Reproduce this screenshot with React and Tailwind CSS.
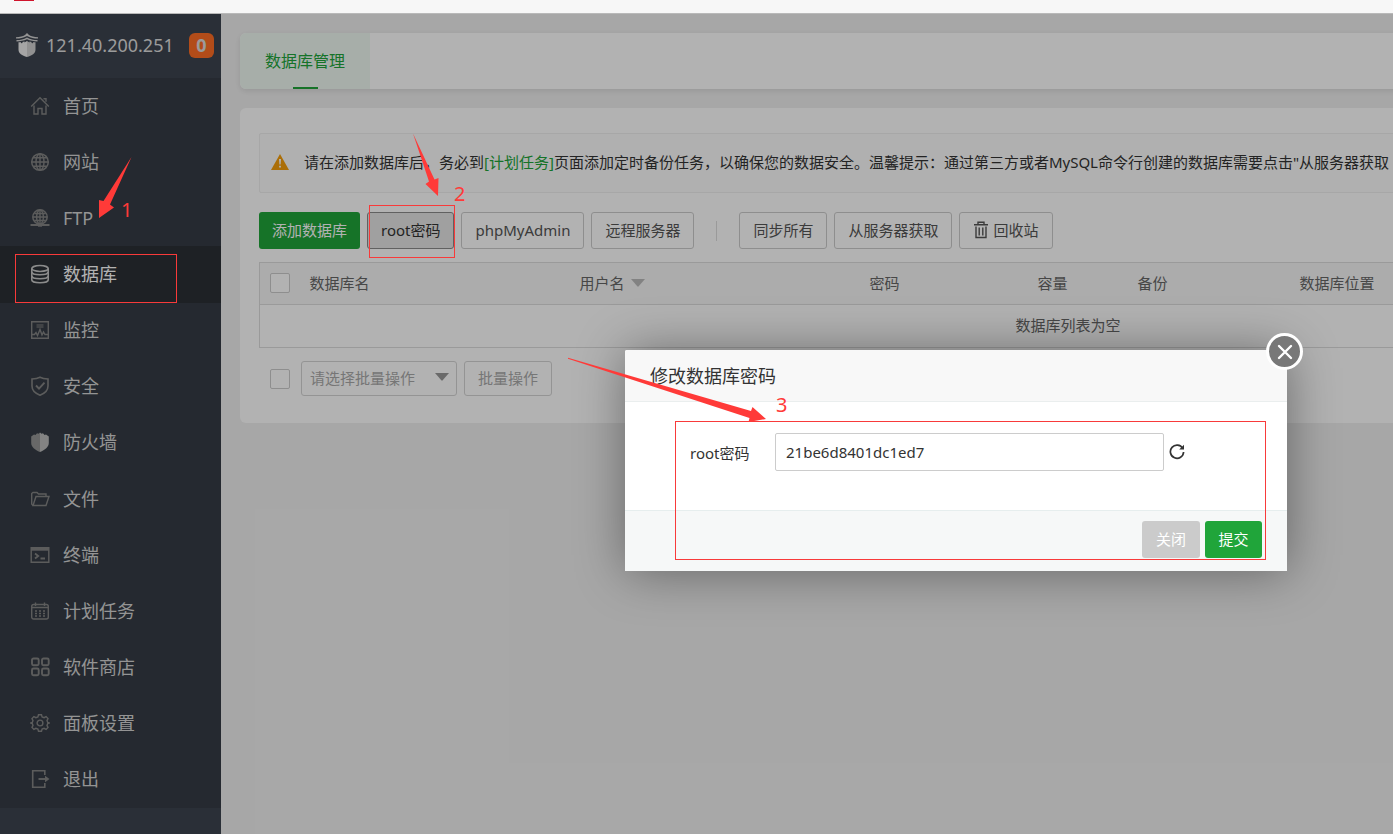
import React from "react";

const icons = {
  home: (
    <>
      <path d="M1.200 10.500 10 1.800l8.800 8.700" />
      <path d="M4 9.500V18h4v-5.500h4V18h4V9.500" />
      <path d="M13.500 2.800H16v3" />
    </>
  ),
  globe: (
    <>
      <circle cx="10" cy="10" r="8.300" strokeWidth="1.500" />
      <ellipse cx="10" cy="10" rx="4" ry="8.300" />
      <path d="M10 1.700v16.600M1.700 10h16.600M3.200 5.800h13.600M3.200 14.200h13.600" />
    </>
  ),
  ftp: (
    <>
      <circle cx="10" cy="9" r="7.200" strokeWidth="1.500" />
      <ellipse cx="10" cy="9" rx="3.400" ry="7" />
      <path d="M10 2v14M3 9h14M4.500 5.500h11M4.500 12.500h11" />
      <path d="M0.500 17h19" strokeWidth="2" />
      <path d="M8 17h4" strokeWidth="3.400" />
    </>
  ),
  database: (
    <g strokeWidth="1.600">
      <ellipse cx="10" cy="4.500" rx="8.200" ry="3" />
      <path d="M1.800 4.500v11.500c0 1.500 3.600 2.700 8.200 2.700s8.200-1.200 8.200-2.700V4.500" />
      <path d="M2 8c0 1.600 3.500 2.700 8 2.700s8-1.100 8-2.700M2 12c0 1.600 3.500 2.700 8 2.700s8-1.100 8-2.700" />
    </g>
  ),
  monitor: (
    <>
      <path d="M1.700 1.700h16.600v16.600H1.700z" />
      <path d="M6.500 5h7M6.500 7h7" strokeWidth="1.100" />
      <path d="M2 14.500h2.500l1.500-2 1.500 3 2.500-6 2 5.500 1.500-3 1.500 2.500H18" />
    </>
  ),
  safe: (
    <g strokeWidth="1.600">
      <path d="M10 1.200c2.500 1.200 5 1.600 8 1.800v7c0 4.500-3.500 7.500-8 9.200C5.500 17.500 2 14.500 2 10V3c3-.2 5.500-.6 8-1.800z" />
      <path d="m6 9.500 3 3.200 5.500-6" strokeWidth="1.900" />
    </g>
  ),
  firewall: (
    <g stroke="none">
      <path d="M10 0.500 8.500 1.800 7 1.300 5.500 3 4 2.600 1.200 4.500V11c0 4 3.800 7 8.800 9z" fill="#969696" />
      <path d="m10 0.500 1.500 1.300 1.500-.5L14.500 3l1.500-.4 2.800 1.900V11c0 4-3.800 7-8.800 9z" fill="#bcbcbc" />
    </g>
  ),
  folder: (
    <>
      <path d="M3 16.500 1.700 15V4.500L3 3.500h4l1.500 1.500H16v2" />
      <path d="M3 16.500 6 7.500h13L16 16.500z" />
    </>
  ),
  terminal: (
    <>
      <path d="M1.200 2.700h17.600v14.600H1.200z" />
      <path d="M1 4h18" strokeWidth="3.400" />
      <path d="m5 8.500 3.200 2.500L5 13.500M10.500 13.500h4.500" strokeWidth="1.800" />
    </>
  ),
  calendar: (
    <>
      <rect x="1.700" y="3.500" width="16.600" height="14.500" rx="2" />
      <path d="M2 6.500h16M5.500 1.500v3.500M14.500 1.500v3.500" />
      <path d="M5 10h10M5 12.500h10M5 15h10" strokeDasharray="2 2" />
    </>
  ),
  store: (
    <g strokeWidth="1.900">
      <rect x="2" y="1.500" width="6.700" height="6.700" rx="1.500" />
      <rect x="12" y="1.500" width="6.700" height="6.700" rx="1.500" />
      <rect x="2" y="11.500" width="6.700" height="6.700" rx="1.500" />
      <rect x="12" y="11.500" width="6.700" height="6.700" rx="1.500" />
    </g>
  ),
  settings: (
    <>
      <circle cx="10" cy="10" r="2.900" />
      <path d="M8.500 1.800h3l.6 2.100 2 .8 2-1.100 1.900 2-1 2 .7 1.800 1.500.6-1.500.6-.7 1.800 1 2-1.900 2-2-1.100-2 .8-.6 2.100h-3l-.6-2.100-2-.8-2 1.100-1.900-2 1-2-.7-1.800L.8 10l1.500-.6L3 7.600l-1-2 1.900-2 2 1.100 2-.8z" />
    </>
  ),
  exit: (
    <>
      <path d="M14.800 6V1.700H2.700v16.600h12.100V14" strokeWidth="1.600" />
      <path d="M8.500 10H17" strokeWidth="1.900" />
      <path d="m15 6.800 4.500 3.200-4.500 3.200z" fill="currentColor" stroke="none" />
    </>
  ),
};

const menu = [
  ["home", "首页"],
  ["globe", "网站"],
  ["ftp", "FTP"],
  ["database", "数据库"],
  ["monitor", "监控"],
  ["safe", "安全"],
  ["firewall", "防火墙"],
  ["folder", "文件"],
  ["terminal", "终端"],
  ["calendar", "计划任务"],
  ["store", "软件商店"],
  ["settings", "面板设置"],
  ["exit", "退出"],
];

function MenuItem({ icon, label, active }) {
  return (
    <li className={active ? "flex bg-[#2b3035]" : "flex"}>
      <a
        href={"#" + icon}
        className={
          "flex flex-1 items-center gap-[13px] pb-px pl-[30px] text-lg leading-6 " +
          (active ? "text-white" : "text-[#d4d4d4]")
        }
      >
        <svg
          viewBox="0 0 20 20"
          className={"size-5 " + (active ? "text-[#c8c8c8]" : "text-[#858585]")}
          fill="none"
          stroke="currentColor"
          strokeWidth="1.400"
          aria-hidden="true"
        >
          {icons[icon]}
        </svg>
        {label}
      </a>
    </li>
  );
}

function Sidebar() {
  return (
    <aside className="w-[221px] shrink-0 bg-[#3d444f]">
      <div className="flex h-16 items-center pr-[7px] pb-[2px] pl-[15px] text-[#dedede]">
        <svg viewBox="0 0 24 26" className="h-[26px] w-6" aria-hidden="true">
          <path d="M12 1 14 3c2.500 1.600 5 2 9 2.200v1.400c-4 0-7-.6-11-2.500C8 6 5 6.600 1 6.600V5.200C5 5 7.500 4.600 10 3z" fill="#d4d4d4" />
          <path d="M12 5.500c3.500 1.800 6.500 2.500 10.500 2.600v1.300C18.500 9.300 15.500 8.800 12 7.300 8.500 8.800 5.500 9.300 1.500 9.400V8.100C5.500 8 8.500 7.300 12 5.500z" fill="#d4d4d4" />
          <path d="M3.500 10.300H6v1l1.500-.3V10l2-.5v1L12 9V25c-5-1.600-8.500-3.500-8.500-7.500z" fill="#ececec" />
          <path d="M20.500 10.300H18v1l-1.500-.3V10l-2-.5v1L12 9V25c5-1.600 8.500-3.500 8.500-7.500z" fill="#d0d0d0" />
        </svg>
        <span className="ml-[7px] text-lg">121.40.200.251</span>
        <span className="ml-auto flex size-[25px] items-center justify-center rounded-md bg-[#ff6e25] text-lg font-bold">
          0
        </span>
      </div>
      <ul className="grid h-[730px] auto-rows-fr bg-[#353c45]">
        {menu.map(([icon, label]) => (
          <MenuItem key={icon} icon={icon} label={label} active={icon === "database"} />
        ))}
      </ul>
    </aside>
  );
}

function ToolButton({ children, pressed }) {
  return (
    <button
      type="button"
      className={
        "flex h-[37px] items-center gap-1 rounded-[3px] border px-[13px] pb-[2px] whitespace-nowrap " +
        (pressed
          ? "border-[#8c8c8c] bg-[#e6e6e6] text-[#333]"
          : "border-[#ccc] bg-white text-[#555]")
      }
    >
      {children}
    </button>
  );
}

function Tick({ label }) {
  return (
    <input
      type="checkbox"
      aria-label={label}
      className="block size-5 appearance-none rounded-xs border border-[#ccc] bg-white"
    />
  );
}

function Caret({ className }) {
  return (
    <svg viewBox="0 0 14 8" className={"h-2 w-[14px] " + className} aria-hidden="true">
      <path d="M0 0h14L7.700 7.300q-.7.700-1.400 0z" fill="currentColor" />
    </svg>
  );
}

function DatabaseTable() {
  return (
    <table className="w-full table-fixed border-collapse border border-[#ddd] text-left text-[#666]">
      <colgroup>
        <col className="w-10" />
        <col className="w-[270px]" />
        <col className="w-[290px]" />
        <col className="w-[168px]" />
        <col className="w-[100px]" />
        <col className="w-[162px]" />
        <col />
      </colgroup>
      <thead>
        <tr className="h-[42px] border-b border-[#ddd] bg-[#f6f6f6]">
          <th className="px-[10px] pb-[2px] font-normal">
            <Tick label="全选" />
          </th>
          <th className="px-[10px] pb-[2px] font-normal">数据库名</th>
          <th className="px-[10px] pb-[2px] font-normal">
            <span className="flex items-center gap-[6px]">
              用户名
              <Caret className="text-[#bbb]" />
            </span>
          </th>
          <th className="px-[10px] pb-[2px] font-normal">密码</th>
          <th className="px-[10px] pb-[2px] font-normal">容量</th>
          <th className="px-[10px] pb-[2px] font-normal">备份</th>
          <th className="px-[10px] pb-[2px] font-normal">数据库位置</th>
        </tr>
      </thead>
      <tbody>
        <tr className="h-[43px]">
          <td colSpan={7} className="pb-[2px] text-center">
            数据库列表为空
          </td>
        </tr>
      </tbody>
    </table>
  );
}

function Main() {
  return (
    <main className="flex min-w-[1694px] flex-1 flex-col gap-[19px] p-[19px]">
      <nav className="flex h-14 rounded-md bg-white shadow-[0_2px_6px_rgba(0,0,0,0.1)]">
        <a
          href="#manage"
          className="flex flex-col items-center rounded-l-md bg-[#f0f9f3] px-[25px] text-base text-[#20a53a]"
        >
          <span className="flex flex-1 items-center">数据库管理</span>
          <span className="-mt-[2px] h-[2px] w-[25px] bg-[#20a53a]" />
        </a>
      </nav>
      <section className="rounded-md bg-white px-[19px] pt-[25px] pb-[27px]">
        <div className="flex h-[60px] items-center rounded-xs border border-[#efefef] bg-[#fcfcfc] pb-[2px] pl-[11px] whitespace-nowrap text-[#333]">
          <svg viewBox="0 0 18 16" className="mr-[15px] h-4 w-[18px]" aria-hidden="true">
            <path d="M9 0 18 16H0z" fill="#f59e0b" />
            <path d="M8 5h2l-.4 5.500H8.400zM8.100 11.700h1.800v1.800H8.100z" fill="#fff" />
          </svg>
          <p>
            请在添加数据库后，务必到
            <a href="#crontab" className="text-[#20a53a]">
              [计划任务]
            </a>
            页面添加定时备份任务，以确保您的数据安全。温馨提示：通过第三方或者MySQL命令行创建的数据库需要点击"从服务器获取
          </p>
        </div>
        <div className="mt-[19px] mb-[13px] flex items-center gap-[7px]">
          <button
            type="button"
            className="h-[37px] rounded-[3px] bg-[#20a53a] px-[13px] pb-[2px] whitespace-nowrap text-white"
          >
            添加数据库
          </button>
          <ToolButton pressed>root密码</ToolButton>
          <ToolButton>phpMyAdmin</ToolButton>
          <ToolButton>远程服务器</ToolButton>
          <span className="mx-[15px] h-5 w-px bg-[#ddd]" />
          <ToolButton>同步所有</ToolButton>
          <ToolButton>从服务器获取</ToolButton>
          <ToolButton>
            <svg
              viewBox="0 0 16 18"
              className="h-[18px] w-4"
              fill="none"
              stroke="currentColor"
              strokeWidth="1.400"
              aria-hidden="true"
            >
              <path d="M1 3.700h14M5 3.500V1.200h6v2.300M3 5.500V16.500h10V5.500M6.200 6.500v8M9.800 6.500v8" />
            </svg>
            回收站
          </ToolButton>
        </div>
        <DatabaseTable />
        <div className="mt-[13px] flex items-center pl-[11px]">
          <Tick label="选择全部" />
          <div className="relative ml-[11px]">
            <select
              aria-label="批量操作"
              className="block h-[35px] w-[156px] appearance-none rounded-[3px] border border-[#d4d4d4] bg-white pb-[2px] pl-2 text-[#aaa]"
            >
              <option>请选择批量操作</option>
            </select>
            <Caret className="pointer-events-none absolute top-3 right-2 text-[#999]" />
          </div>
          <button
            type="button"
            className="ml-[7px] h-[35px] rounded-[3px] border border-[#d4d4d4] px-[13px] pb-[2px] text-[#aaa]"
          >
            批量操作
          </button>
        </div>
      </section>
    </main>
  );
}

function PasswordDialog() {
  return (
    <form
      role="dialog"
      aria-labelledby="dialog-title"
      className="absolute top-[350px] left-[625px] w-[662px] rounded-xs bg-white text-[#333] shadow-[1px_1px_50px_rgba(0,0,0,0.4)]"
    >
      <h2
        id="dialog-title"
        className="flex h-[52px] items-center rounded-t-xs border-b border-[#eaeeee] bg-[#f8f8f8] pl-[25px] text-lg"
      >
        修改数据库密码
      </h2>
      <div className="flex h-[108px] items-start pt-[31px] pl-[65px]">
        <label htmlFor="root-password" className="w-[85px] leading-[40px]">
          root密码
        </label>
        <input
          id="root-password"
          type="text"
          defaultValue="21be6d8401dc1ed7"
          className="h-[38px] w-[389px] rounded-xs border border-[#ccc] bg-white px-[10px]"
        />
        <button type="button" aria-label="刷新" className="mt-[11px] ml-[5px]">
          <svg viewBox="0 0 16 16" className="size-4" fill="none" stroke="#333" aria-hidden="true">
            <path d="M13.700 4.300A6.600 6.600 0 1 0 14.600 8" strokeWidth="1.700" />
            <path d="M15 .8V5.600h-4.800z" fill="#333" stroke="none" />
          </svg>
        </button>
      </div>
      <div className="flex h-[61px] justify-end gap-[5px] border-t border-[#e6eeee] bg-[#f6f8f8] pt-[10px] pr-[25px]">
        <button type="button" className="h-[37px] w-[58px] rounded-[3px] bg-[#cbcbcb] pb-[2px] text-white">
          关闭
        </button>
        <button type="button" className="h-[37px] w-[57px] rounded-[3px] bg-[#20a53a] pb-[2px] text-white">
          提交
        </button>
      </div>
      <button
        type="button"
        aria-label="关闭窗口"
        className="absolute -top-[17px] -right-4 flex size-[37px] items-center justify-center rounded-full border-[3px] border-white bg-[#787878]"
      >
        <svg viewBox="0 0 16 16" className="size-4" stroke="#fff" strokeWidth="2.400" aria-hidden="true">
          <path d="m2 2 12 12M14 2 2 14" strokeLinecap="round" />
        </svg>
      </button>
    </form>
  );
}

function Annotations() {
  return (
    <div className="pointer-events-none absolute inset-0 text-xl leading-6 text-[#ff3a38]">
      <svg width="1393" height="834" className="absolute top-0 left-0" aria-hidden="true">
        <g fill="none" stroke="#f83a3a">
          <rect x="15.500" y="254.500" width="161" height="48" />
          <rect x="369.500" y="205.500" width="85" height="52" />
          <rect x="675.500" y="421.500" width="590" height="138" />
        </g>
        <g fill="#ff3a38">
          <path d="M131.500 157 110 204.500l4 3L99 218v-18l4.500 1z" />
          <path d="M413 133.500 434.500 179.500l4-1.500-.5 18-12.500-12 3.500-2.500z" />
          <path d="M568 357.700 751 411l1.500-4 13.500 12-17.500 3 1-4L568 358.700z" />
        </g>
      </svg>
      <span className="absolute top-[198px] left-[121px]">1</span>
      <span className="absolute top-[182px] left-[454px]">2</span>
      <span className="absolute top-[393px] left-[776px]">3</span>
    </div>
  );
}

export default function App() {
  return (
    <div
      lang="zh-CN"
      className="relative flex min-h-screen flex-col overflow-hidden bg-[#f0f0f0] font-['Noto_Sans','Noto_Sans_CJK_SC',sans-serif] text-[15px] leading-5"
    >
      <header className="h-[14px] border-b border-[#b9b9b9] bg-[#f7f7f7]">
        <div className="ml-[14px] h-px w-5 bg-[#d0142c]" />
      </header>
      <div className="relative flex flex-1">
        <Sidebar />
        <Main />
        <div className="absolute inset-0 bg-black/30" />
      </div>
      <PasswordDialog />
      <Annotations />
    </div>
  );
}
